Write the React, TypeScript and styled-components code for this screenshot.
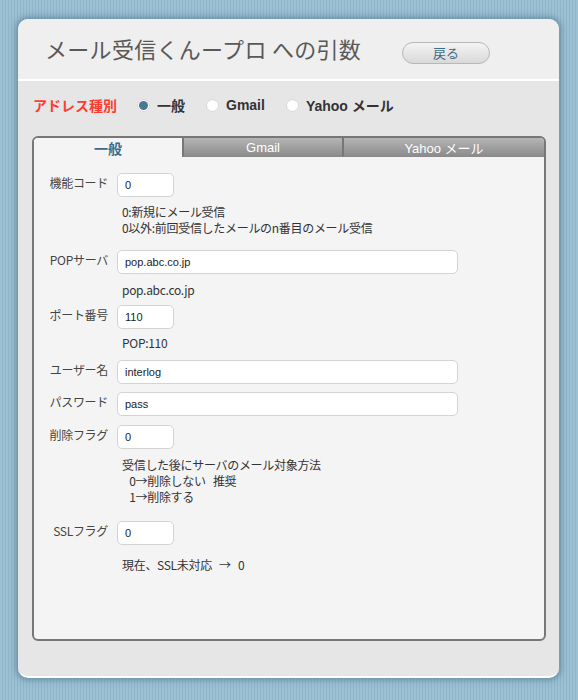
import React, { useState } from 'react'
import styled, { createGlobalStyle } from 'styled-components'

const GlobalStyle = createGlobalStyle`
  html, body {
    margin: 0;
    padding: 0;
  }
  body {
    width: 578px;
    height: 700px;
    overflow: hidden;
    background: repeating-linear-gradient(90deg, #9dc1d4 0px, #9dc1d4 2px, #8fb5c9 2px, #8fb5c9 3px);
    font-family: "Noto Sans CJK JP", "Liberation Sans", sans-serif;
  }
`

const Card = styled.div`
  margin: 19px 0 0 18px;
  width: 541px;
  height: 659px;
  box-sizing: border-box;
  border-radius: 10px;
  background: #e6e6e6;
  border-bottom: 2px solid #fff;
  box-shadow: 0 0 6px 2px rgba(60, 100, 125, 0.55);
  display: flex;
  flex-direction: column;
  overflow: hidden;
`

const Header = styled.div`
  height: 60px;
  background: #efefef;
  border-bottom: 2px solid #fff;
  display: flex;
  align-items: center;
  padding: 0 0 0 27px;
  flex-shrink: 0;
`

const Title = styled.h1`
  margin: 0 0 2px 0;
  font-size: 22px;
  font-weight: normal;
  color: #595959;
  letter-spacing: 0.3px;
  width: 357px;
`

const BackButton = styled.button`
  width: 88px;
  height: 22px;
  margin-top: 7px;
  border: 1px solid #b8b8b8;
  border-radius: 11px;
  background: linear-gradient(#f4f4f4, #d9d9d9);
  color: #3f6c86;
  font-family: inherit;
  font-size: 13px;
  padding: 0;
  line-height: 18px;
`

const TypeRow = styled.div`
  display: flex;
  align-items: center;
  height: 24px;
  margin: 12px 0 0 15px;
`

const TypeLabel = styled.span`
  color: #ff3b30;
  font-size: 14px;
  font-weight: bold;
  width: 104px;
`

const RadioItem = styled.label`
  display: flex;
  align-items: center;
  margin-right: 21px;
  font-family: "Liberation Sans", "Noto Sans CJK JP", sans-serif;
  font-size: 14px;
  font-weight: bold;
  color: #333;
  cursor: pointer;
`

const RadioDot = styled.span<{ $on: boolean }>`
  width: 13px;
  height: 13px;
  border-radius: 50%;
  background: #fff;
  box-shadow: 0 0 0 1px #d4d4d4 inset;
  margin-right: 7px;
  display: flex;
  align-items: center;
  justify-content: center;
  &::after {
    content: '';
    width: 9px;
    height: 9px;
    border-radius: 50%;
    background: ${({ $on }) => ($on ? '#4a7891' : 'transparent')};
  }
`

const Panel = styled.div`
  margin: 19px 13px 0 14px;
  height: 505px;
  box-sizing: border-box;
  border: 2px solid #777;
  border-radius: 6px;
  background: #f4f4f4;
  display: flex;
  flex-direction: column;
  overflow: hidden;
`

const Tabs = styled.div`
  display: flex;
  height: 19px;
  flex-shrink: 0;
`

const Tab = styled.div<{ $active: boolean; $w: number }>`
  width: ${({ $w }) => $w}px;
  box-sizing: border-box;
  display: flex;
  align-items: center;
  justify-content: center;
  font-family: ${({ $active }) =>
    $active ? '"Noto Sans CJK JP", sans-serif' : '"Liberation Sans", "Noto Sans CJK JP", sans-serif'};
  font-size: ${({ $active }) => ($active ? '14px' : '13px')};
  font-weight: ${({ $active }) => ($active ? 'bold' : 'normal')};
  color: ${({ $active }) => ($active ? '#3a6a85' : '#fff')};
  background: ${({ $active }) => ($active ? '#f4f4f4' : 'linear-gradient(#b5b5b5, #8c8c8c)')};
  border-left: ${({ $active }) => ($active ? 'none' : '2px solid #777')};
  border-bottom: ${({ $active }) => ($active ? 'none' : '1px solid #8a8a8a')};
  cursor: pointer;
`

const Form = styled.div`
  padding: 15px 0 0 0;
  display: flex;
  flex-direction: column;
`

const Row = styled.div<{ $mt: number }>`
  display: flex;
  align-items: flex-start;
  margin-top: ${({ $mt }) => $mt}px;
`

const Label = styled.div`
  width: 74px;
  text-align: right;
  padding-top: 2px;
  margin-right: 9px;
  font-size: 12px;
  color: #444;
  line-height: 16px;
  letter-spacing: -0.3px;
`

const Input = styled.input<{ $wide?: boolean }>`
  width: ${({ $wide }) => ($wide ? 341 : 57)}px;
  height: 24px;
  box-sizing: border-box;
  border: 1px solid #d3d3d3;
  border-radius: 5px;
  background: #fff;
  padding: 0 7px;
  font-family: "Liberation Sans", Arial, sans-serif;
  font-size: 11px;
  color: #222;
  outline: none;
`

const Desc = styled.div<{ $mt: number }>`
  margin: ${({ $mt }) => $mt}px 0 0 88px;
  font-size: 12px;
  line-height: 16px;
  color: #333;
  letter-spacing: -0.3px;
  white-space: pre;
`

type Field = {
  label: string
  value: string
  wide?: boolean
  mt: number
  desc?: string[]
  descMt?: number
}

const fields: Field[] = [
  { label: '機能コード', value: '0', mt: 1, desc: ['0:新規にメール受信', '0以外:前回受信したメールのn番目のメール受信'], descMt: 7 },
  { label: 'POPサーバ', value: 'pop.abc.co.jp', wide: true, mt: 14, desc: ['pop.abc.co.jp'], descMt: 8 },
  { label: 'ポート番号', value: '110', mt: 7, desc: ['POP:110'], descMt: 6 },
  { label: 'ユーザー名', value: 'interlog', wide: true, mt: 9 },
  { label: 'パスワード', value: 'pass', wide: true, mt: 8 },
  { label: '削除フラグ', value: '0', mt: 9, desc: ['受信した後にサーバのメール対象方法', '   0→削除しない   推奨', '   1→削除する'], descMt: 8 },
  { label: 'SSLフラグ', value: '0', mt: 16, desc: ['現在、SSL未対応   →   0'], descMt: 12 },
]

const tabs = [
  { name: '一般', w: 148 },
  { name: 'Gmail', w: 160 },
  { name: 'Yahoo メール', w: 202 },
]

export default function App() {
  const [kind, setKind] = useState(0)

  return (
    <>
      <GlobalStyle />
      <Card>
        <Header>
          <Title>メール受信くんープロ への引数</Title>
          <BackButton>戻る</BackButton>
        </Header>
        <TypeRow>
          <TypeLabel>アドレス種別</TypeLabel>
          {tabs.map((t, i) => (
            <RadioItem key={t.name} onClick={() => setKind(i)}>
              <RadioDot $on={kind === i} />
              {t.name}
            </RadioItem>
          ))}
        </TypeRow>
        <Panel>
          <Tabs>
            {tabs.map((t, i) => (
              <Tab key={t.name} $active={kind === i} $w={t.w} onClick={() => setKind(i)}>
                {t.name}
              </Tab>
            ))}
          </Tabs>
          <Form>
            {fields.map((f) => (
              <React.Fragment key={f.label}>
                <Row $mt={f.mt}>
                  <Label>{f.label}</Label>
                  <Input $wide={f.wide} defaultValue={f.value} />
                </Row>
                {f.desc && <Desc $mt={f.descMt ?? 0}>{f.desc.join('\n')}</Desc>}
              </React.Fragment>
            ))}
          </Form>
        </Panel>
      </Card>
    </>
  )
}
